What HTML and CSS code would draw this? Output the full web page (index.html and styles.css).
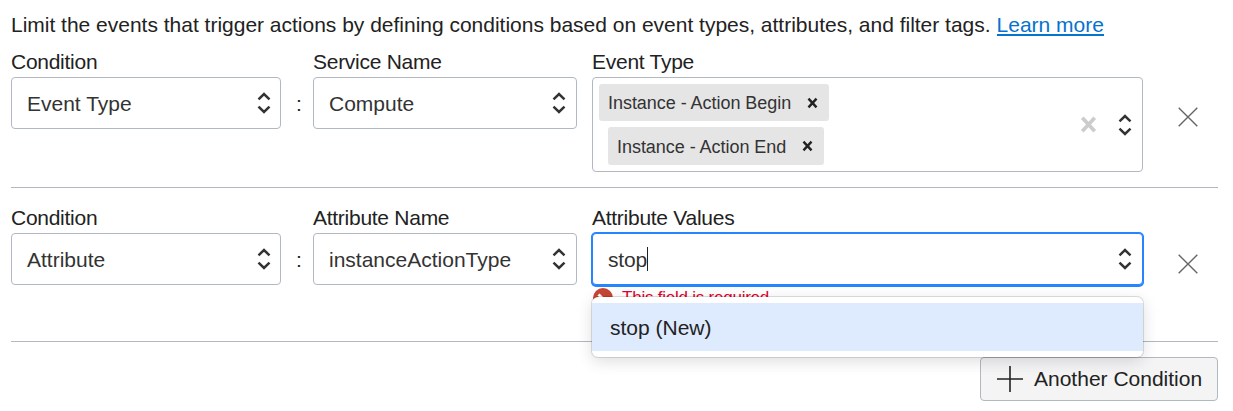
FILE: index.html
```
<!DOCTYPE html>
<html lang="en">
<head>
<meta charset="utf-8">
<title>Rule conditions</title>
<link rel="stylesheet" href="styles.css">
</head>
<body>
<svg class="defs" width="0" height="0">
  <symbol id="sort" viewBox="0 0 14 22"><path d="M1.5 7.3 7 2 12.5 7.3M1.5 14.7 7 20 12.5 14.7" fill="none" stroke="#333" stroke-width="2.5"/></symbol>
  <symbol id="cross" viewBox="0 0 20 20"><path d="M.7.7 19.3 19.3M19.3.7.7 19.3" fill="none" stroke="#666" stroke-width="1.4"/></symbol>
  <symbol id="bold-cross" viewBox="0 0 12 12"><path d="M1.6 1.2 10.4 10.8M10.4 1.2 1.6 10.8" fill="none" stroke="currentColor" stroke-width="2.6"/></symbol>
</svg>
<main class="panel">
  <p class="intro"><span class="intro-text">Limit the events that trigger actions by defining conditions based on event types, attributes, and filter tags.</span><a class="link" href="#">Learn more</a></p>

  <section class="row row-first">
    <div class="field">
      <label class="label">Condition</label>
      <div class="select"><span class="value">Event Type</span><svg class="sort"><use href="#sort"/></svg></div>
    </div>
    <span class="colon">:</span>
    <div class="field">
      <label class="label">Service Name</label>
      <div class="select select-name"><span class="value">Compute</span><svg class="sort"><use href="#sort"/></svg></div>
    </div>
    <div class="field field-wide">
      <label class="label">Event Type</label>
      <div class="select multi">
        <div class="chips">
          <div class="chip chip-begin"><span class="chip-text">Instance - Action Begin</span><svg class="chip-x"><use href="#bold-cross"/></svg></div>
          <div class="chip chip-end"><span class="chip-text">Instance - Action End</span><svg class="chip-x"><use href="#bold-cross"/></svg></div>
        </div>
        <svg class="clear"><use href="#bold-cross"/></svg>
        <svg class="sort"><use href="#sort"/></svg>
      </div>
    </div>
    <svg class="remove"><use href="#cross"/></svg>
  </section>

  <section class="row row-second">
    <div class="field">
      <label class="label">Condition</label>
      <div class="select"><span class="value">Attribute</span><svg class="sort"><use href="#sort"/></svg></div>
    </div>
    <span class="colon">:</span>
    <div class="field">
      <label class="label">Attribute Name</label>
      <div class="select select-name"><span class="value">instanceActionType</span><svg class="sort"><use href="#sort"/></svg></div>
    </div>
    <div class="field field-wide">
      <label class="label">Attribute Values</label>
      <div class="select focused"><span class="typed">stop</span><svg class="sort"><use href="#sort"/></svg></div>
      <div class="error">
        <svg class="error-icon" viewBox="0 0 20 20"><circle cx="10" cy="10" r="10" fill="#c74634"/><path d="M5.5 6.5 13.5 14.5" stroke="#fff" stroke-width="3"/></svg>
        <span class="error-text">This field is required.</span>
      </div>
      <div class="menu"><div class="option"><span>stop (New)</span></div></div>
    </div>
    <svg class="remove"><use href="#cross"/></svg>
  </section>

  <div class="actions">
    <button class="add"><svg class="plus" viewBox="0 0 26 26"><path d="M13 0V26M0 13H26" stroke="#222" stroke-width="1.6"/></svg><span>Another Condition</span></button>
  </div>
</main>
</body>
</html>
```
FILE: styles.css
```
* { box-sizing: border-box; }
body {
  margin: 0;
  background: #fff;
  color: #222;
  font: 21px/24px "Liberation Sans", Arial, sans-serif;
}
svg { display: block; flex: none; }
.defs { position: absolute; }
.panel { width: 1218px; padding-left: 11px; }
.intro {
  display: flex;
  gap: 6px;
  height: 32px;
  margin: 0;
  padding-top: 13px;
  white-space: nowrap;
}
.intro-text { letter-spacing: -0.009px; }
.link {
  height: 23px;
  color: #0572ce;
  text-decoration: none;
  border-bottom: 2px solid #0572ce;
}
.row {
  display: grid;
  grid-template-columns: 270px 32px 264px 551px 20px;
  align-items: start;
  padding-top: 18px;
  border-bottom: 1px solid #b1b8c1;
}
.row-first { height: 156px; }
.row-second { height: 154px; }
.field { position: relative; }
.field-wide { margin-left: 15px; margin-right: -15px; }
.label { display: block; height: 27px; white-space: nowrap; letter-spacing: -0.27px; }
.select {
  display: flex;
  align-items: center;
  justify-content: space-between;
  height: 52px;
  padding: 0 9px 0 15px;
  color: #333;
  background: #fff;
  border: 1px solid #b1b8c4;
  border-radius: 4px;
}
.select-name { padding-right: 10px; }
.value { padding-top: 2px; }
.sort { width: 14px; height: 22px; }
.colon { padding: 42px 0 0 15px; }
.multi { height: 95px; padding: 0 10px 0 6px; }
.chips {
  display: flex;
  flex: 1;
  flex-direction: column;
  align-items: flex-start;
  gap: 6px;
}
.chip {
  display: flex;
  align-items: center;
  justify-content: space-between;
  height: 37px;
  padding: 0 11px 0 9px;
  color: #333;
  background: #e5e5e5;
  border-radius: 3px;
  font-size: 18px;
  white-space: nowrap;
}
.chip-text { padding-top: 1px; letter-spacing: -0.04px; }
.chip-begin { width: 230px; }
.chip-end { width: 216px; height: 38px; margin-left: 9px; }
.chip-x { width: 11px; height: 12px; color: #222; }
.clear { width: 17px; height: 17px; margin-right: 21px; color: #ccc; }
.remove { width: 20px; height: 20px; margin: 57px 0 0 50px; }
.row-second .remove { margin-top: 48px; }
.focused {
  padding-right: 10px;
  border-color: #2684ff;
  box-shadow: 0 0 0 1px #2684ff, 0 1px 0 1px #2684ff;
}
.typed { height: 24px; border-right: 1px solid #222; letter-spacing: -0.2px; line-height: 25px; }
.error {
  display: flex;
  gap: 9px;
  padding: 3px 0 0 1px;
  color: #e4002b;
  font-size: 17px;
  letter-spacing: -0.23px;
}
.error-icon { width: 20px; height: 20px; }
.error-text { line-height: 20px; }
.menu {
  position: absolute;
  top: 91px;
  left: 0;
  width: 551px;
  height: 60px;
  padding: 6px 0;
  background: #fff;
  border-radius: 6px;
  box-shadow: 0 0 0 1px rgba(0, 0, 0, .12), 0 4px 16px rgba(0, 0, 0, .14);
}
.option { height: 48px; padding: 13px 18px 0; color: #222; background: #deebff; }
.actions { display: flex; justify-content: flex-end; padding-top: 15px; }
.add {
  display: flex;
  align-items: center;
  gap: 11px;
  width: 238px;
  height: 44px;
  padding: 0 0 0 16px;
  color: #222;
  background: #f4f4f4;
  border: 1px solid #b1b8bf;
  border-radius: 4px;
  font: inherit;
  white-space: nowrap;
}
.plus { width: 26px; height: 26px; }
```
